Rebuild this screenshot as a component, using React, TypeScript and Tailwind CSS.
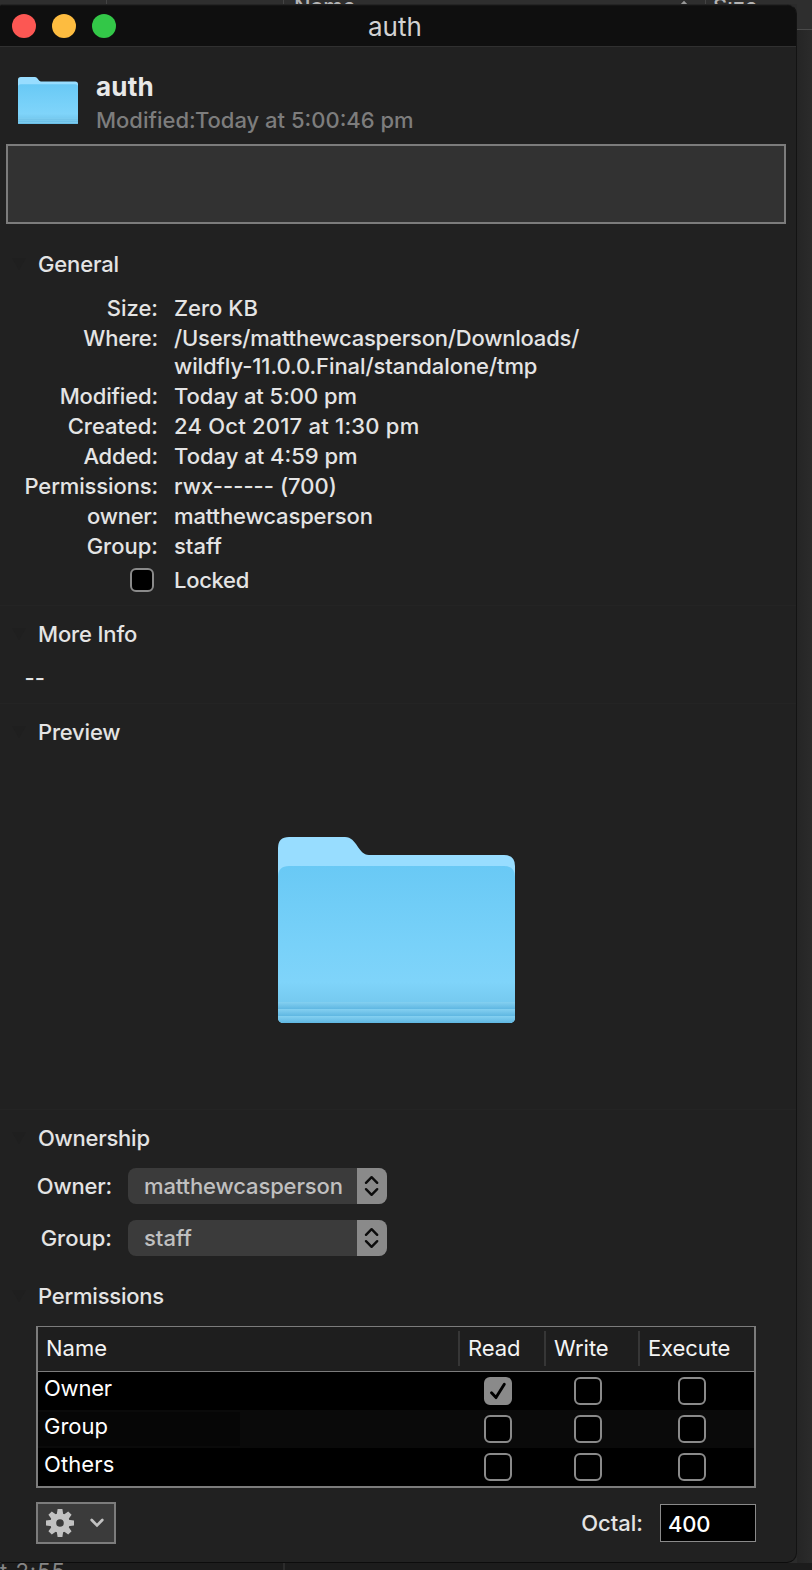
import React from "react";

const dark = "text-[#e4e4e4]";

function Folder({ className, id }: { className: string; id: string }) {
  return (
    <svg className={className} viewBox="0 0 237 186" preserveAspectRatio="none">
      <defs>
        <linearGradient id={`${id}-front`} x1="0" y1="0" x2="0" y2="1">
          <stop offset="0" stopColor="#69c9f5" />
          <stop offset="0.5" stopColor="#78d1f9" />
          <stop offset="0.74" stopColor="#7fd4fa" />
          <stop offset="0.86" stopColor="#76caf0" />
          <stop offset="1" stopColor="#76caf0" />
        </linearGradient>
        <linearGradient id={`${id}-band`} x1="0" y1="0" x2="0" y2="1">
          <stop offset="0" stopColor="#84d0f1" />
          <stop offset="1" stopColor="#5fb7e2" />
        </linearGradient>
        <clipPath id={`${id}-clip`}>
          <path d="M0 11Q0 0 11 0H67C79 0 80 18 91 18H226Q237 18 237 29V180Q237 186 231 186H6Q0 186 0 180Z" />
        </clipPath>
      </defs>
      <g clipPath={`url(#${id}-clip)`}>
        <rect width="237" height="186" fill="#98ddff" />
        <path d="M0 40Q0 29 11 29H226Q237 29 237 40V186H0Z" fill={`url(#${id}-front)`} />
        <rect y="165" width="237" height="7" fill={`url(#${id}-band)`} />
        <rect y="172" width="237" height="7" fill={`url(#${id}-band)`} />
        <rect y="179" width="237" height="7" fill={`url(#${id}-band)`} />
      </g>
    </svg>
  );
}

function Heading({ children, className }: { children: string; className: string }) {
  return (
    <div className="flex h-[30px] items-center">
      <svg className="ml-[12px] h-[12px] w-[14px] shrink-0" viewBox="0 0 14 12">
        <path d="M0 0H14L7 12Z" fill="#1f1f1f" />
      </svg>
      <h2 className={`ml-[12px] whitespace-nowrap leading-[30px] ${dark} ${className}`}>{children}</h2>
    </div>
  );
}

function Row({ label, labelClass, value, valueClass }: { label: string; labelClass: string; value: string; valueClass: string }) {
  return (
    <div className="flex h-[30px] leading-[30px] whitespace-nowrap">
      <div className="flex w-[158px] justify-end">
        <span className={labelClass}>{label}</span>
      </div>
      <span className={`ml-4 ${valueClass}`}>{value}</span>
    </div>
  );
}

function Select({ label, labelClass, value, valueClass }: { label: string; labelClass: string; value: string; valueClass: string }) {
  return (
    <div className="flex h-9 items-center whitespace-nowrap leading-9">
      <div className={`flex w-[112px] justify-end ${dark}`}>
        <span className={labelClass}>{label}</span>
      </div>
      <div className="ml-4 flex h-9 w-[259px] overflow-hidden rounded-[8px] bg-[#3b3b3b]">
        <span className={`flex-1 pl-4 text-[#c0c0c0] ${valueClass}`}>{value}</span>
        <span className="flex h-9 w-[30px] items-center justify-center bg-[#8a8a8a]">
          <svg className="h-[22px] w-[16px]" viewBox="0 0 16 22" fill="none" stroke="#0c0c0c" strokeWidth="2.4" strokeLinecap="round" strokeLinejoin="round">
            <path d="M2 7.8L7.6 2.2L13.2 7.8M2 14.2L7.6 19.8L13.2 14.2" />
          </svg>
        </span>
      </div>
    </div>
  );
}

function Check({ on }: { on?: boolean }) {
  return on ? (
    <span className="flex size-7 items-center justify-center rounded-[6px] bg-[#8a8a8a]">
      <svg className="size-7" viewBox="0 0 28 28" fill="none" stroke="#000" strokeWidth="2.9" strokeLinecap="round" strokeLinejoin="round">
        <path d="M7.5 15.8L12 20.6L20.3 7.2" />
      </svg>
    </span>
  ) : (
    <span className="block size-7 rounded-[6px] border-2 border-[#8a8a8a] bg-black" />
  );
}

function PermRow({ name, nameClass, read, shaded }: { name: string; nameClass: string; read?: boolean; shaded?: boolean }) {
  return (
    <div className={`flex h-[38px] pt-[5px] ${shaded ? "bg-[#0a0a0a]" : "bg-black"}`}>
      <div className="w-[446px]">
        <div className={`-mt-[3px] h-[34px] w-[202px] pl-[6px] leading-[28px] ${shaded ? "bg-[#060606]" : ""}`}>
          <span className={`font-[430] text-white ${nameClass}`}>{name}</span>
        </div>
      </div>
      <Check on={read} />
      <div className="w-[62px]" />
      <Check />
      <div className="w-[76px]" />
      <Check />
    </div>
  );
}

export default function App() {
  return (
    <div className="flex h-[1570px] w-[812px] flex-col overflow-hidden bg-[#2b2b2b] font-['Inter','Liberation_Sans',sans-serif] text-[22px] font-[450]">
      <div className="flex h-[4px] shrink-0 overflow-hidden bg-[#2e2e2e] leading-[30px] font-medium text-[#b4b4b4]">
        <div className="h-[4px] w-[107px] border-r border-[#444]" />
        <div className="h-[4px] w-[177px] border-r border-[#444]" />
        <span className="-mt-[9px] ml-[10px] w-[386px]">Name</span>
        <svg className="h-[4px] w-[8px]" viewBox="0 0 8 4" fill="none" stroke="#999" strokeWidth="1.6">
          <path d="M1 5L4 2L7 5" />
        </svg>
        <div className="h-[4px] w-[18px] border-r border-[#444]" />
        <span className="-mt-[9px] ml-[7px]">Size</span>
      </div>

      <div className="flex h-[1559px] shrink-0">
        <div className="flex w-[797px] flex-col overflow-hidden rounded-l-[3px] rounded-r-[10px] border-t border-r border-b border-t-[#242424] border-r-[#131313] border-b-[#0c0c0c] bg-[#212121]">
          <div className="flex h-[42px] shrink-0 items-center border-t border-b border-t-[#151515] border-b-[#303030] bg-[#0f0f0f]">
            <div className="ml-3 flex gap-4">
              <span className="size-6 rounded-full bg-[#fc5753]" />
              <span className="size-6 rounded-full bg-[#fdbc40]" />
              <span className="size-6 rounded-full bg-[#33c748]" />
            </div>
            <span className="mt-px ml-[252px] text-[26px] leading-[41px] font-normal text-[#d2d2d2]">auth</span>
          </div>

          <div className="flex h-[97px] shrink-0">
            <Folder id="small" className="mt-[30px] ml-[18px] h-[47px] w-[60px]" />
            <div className="ml-[18px] whitespace-nowrap">
              <div className="mt-[25px] h-[32px] text-[26px] leading-[30px] font-bold tracking-[0.2px] text-[#e8e8e8]">auth</div>
              <div className="leading-[32px] text-[#7d7d7d]">Modified:Today at 5:00:46 pm</div>
            </div>
          </div>

          <div className="ml-[6px] h-20 w-[780px] shrink-0 border-2 border-[#7c7c7c] bg-[#323232]" />

          <section className="h-[381px] shrink-0 pt-[25px]">
            <Heading className="tracking-[-0.15px]">General</Heading>
            <div className={`pt-[14px] ${dark}`}>
              <Row label="Size:" labelClass="" value="Zero KB" valueClass="" />
              <div className="flex py-px leading-[28px] whitespace-nowrap">
                <div className="flex w-[158px] justify-end"><span className="tracking-[-0.2px]">Where:</span></div>
                <div className="ml-4 flex flex-col items-start">
                  <span className="tracking-[-0.2px]">/Users/matthewcasperson/Downloads/</span>
                  <span className="tracking-[-0.08px]">wildfly-11.0.0.Final/standalone/tmp</span>
                </div>
              </div>
              <Row label="Modified:" labelClass="tracking-[-0.15px]" value="Today at 5:00 pm" valueClass="tracking-[-0.05px]" />
              <Row label="Created:" labelClass="" value="24 Oct 2017 at 1:30 pm" valueClass="tracking-[0.23px]" />
              <Row label="Added:" labelClass="tracking-[-0.2px]" value="Today at 4:59 pm" valueClass="" />
              <Row label="Permissions:" labelClass="tracking-[-0.13px]" value="rwx------ (700)" valueClass="tracking-[0.03px]" />
              <Row label="owner:" labelClass="tracking-[-0.25px]" value="matthewcasperson" valueClass="tracking-[-0.12px]" />
              <Row label="Group:" labelClass="" value="staff" valueClass="" />
              <div className="mt-[4px] flex h-[30px] leading-[30px]">
                <span className="mt-[3px] ml-[130px] block size-6 rounded-[6px] border-2 border-[#8a8a8a] bg-black" />
                <span className="ml-[20px] tracking-[-0.3px]">Locked</span>
              </div>
            </div>
          </section>

          <section className="h-[98px] shrink-0 border-t border-[#242424] pt-[13px]">
            <Heading className="tracking-[-0.15px]">More Info</Heading>
            <div className={`mt-[14px] ml-[24.5px] leading-[30px] font-medium ${dark}`}>--</div>
          </section>

          <section className="h-[406px] shrink-0 border-t border-[#242424] pt-[13px]">
            <Heading className="tracking-[-0.2px]">Preview</Heading>
            <Folder id="large" className="mt-[90px] ml-[278px] h-[186px] w-[237px]" />
          </section>

          <section className="h-[162px] shrink-0 border-t border-[#242424] pt-[13px]">
            <Heading className="tracking-[-0.25px]">Ownership</Heading>
            <div className="mt-[15px] flex flex-col gap-4">
              <Select label="Owner:" labelClass="tracking-[-0.2px]" value="matthewcasperson" valueClass="tracking-[-0.12px]" />
              <Select label="Group:" labelClass="" value="staff" valueClass="" />
            </div>
          </section>

          <section className="shrink-0 pt-[10px]">
            <Heading className="tracking-[-0.22px]">Permissions</Heading>
            <div className="mt-[15px] ml-9 h-[162px] w-[720px] border-x-2 border-t border-b-2 border-[#7c7c7c]">
              <div className="flex h-[45px] border-b border-[#7c7c7c] bg-[#1e1e1e] pt-[4px] leading-[34px] font-normal text-[#f4f4f4]">
                <span className="w-[420px] pl-2">Name</span>
                <span className="h-[35px] w-[86px] border-l-2 border-[#363636] pl-2 tracking-[-0.1px]">Read</span>
                <span className="h-[35px] w-[94px] border-l-2 border-[#363636] pl-2">Write</span>
                <span className="h-[35px] border-l-2 border-[#363636] pl-2 tracking-[-0.1px]">Execute</span>
              </div>
              <PermRow name="Owner" nameClass="tracking-[-0.2px]" read />
              <PermRow name="Group" nameClass="" shaded />
              <PermRow name="Others" nameClass="tracking-[0.1px]" />
            </div>
            <div className="mt-[14px] flex items-center pl-9">
              <button className="flex h-[42px] w-20 items-center border-2 border-[#7c7c7c] bg-[#3b3b3b]">
                <svg className="ml-[8px] size-7" viewBox="-14 -14 28 28" fill="#c2c2c2">
                  {[0, 45, 90, 135].map((a) => (
                    <path key={a} transform={`rotate(${a})`} d="M-2.4 -14H2.4L3.3 -8H-3.3ZM-2.4 14H2.4L3.3 8H-3.3Z" />
                  ))}
                  <circle r="6.8" fill="none" stroke="#c2c2c2" strokeWidth="6" />
                </svg>
                <svg className="ml-[16px] h-[10px] w-[14px]" viewBox="0 0 14 10" fill="none" stroke="#c2c2c2" strokeWidth="2.7" strokeLinecap="round">
                  <path d="M1.7 2L7 7.4L12.3 2" />
                </svg>
              </button>
              <div className={`flex w-[527px] justify-end ${dark}`}><span>Octal:</span></div>
              <div className="ml-[17px] h-[38px] w-24 border border-[#8a8a8a] bg-black pl-[7px] leading-[38px] font-[550] tracking-[-0.2px] text-white">400</div>
            </div>
          </section>
        </div>
        <div className="flex-1 bg-gradient-to-r from-[#252525] to-[#2b2b2b]">
          <div className="h-[26px] border-b border-[#4a4a4a] bg-[#2e2e2e]" />
        </div>
      </div>

      <div className="flex h-[7px] shrink-0 overflow-hidden bg-[#1c1c1c] leading-[30px] font-normal text-[#858585]">
        <span className="-mt-[7px] w-[283px] tracking-[1px]">t 2:55</span>
        <div className="w-[2px] bg-[#2c2c2c]" />
      </div>
    </div>
  );
}
